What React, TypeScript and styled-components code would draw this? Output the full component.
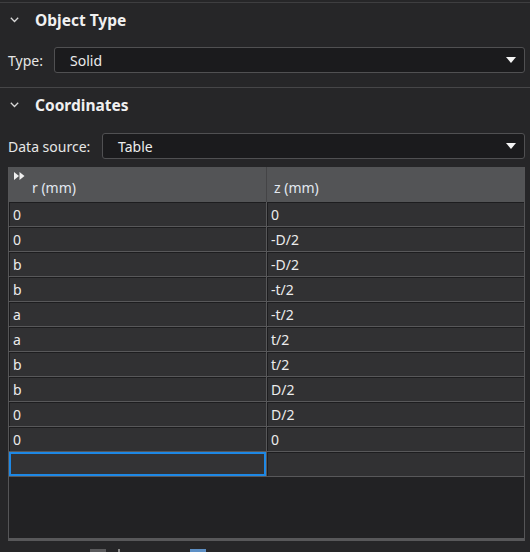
import React from "react";
import styled, { createGlobalStyle } from "styled-components";

const Global = createGlobalStyle`
  html, body { margin: 0; padding: 0; background: #262628; }
  body { font-family: "Noto Sans", "Open Sans", sans-serif; color: #e4e4e4; }
  * { box-sizing: border-box; }
`;

const Panel = styled.div`
  width: 530px;
  height: 552px;
  overflow: hidden;
  background: #262628;
  border-top: 1px solid #3e3e40;
  margin-top: 2px;
  display: flex;
  flex-direction: column;
`;

const SectionHeader = styled.div`
  height: 34px;
  display: flex;
  align-items: center;
  padding-left: 10px;
  gap: 16px;
  font-size: 15.5px;
  font-weight: 700;
  color: #f0f0f0;
`;

const Divider = styled.div`
  height: 1px;
  background: #464648;
  margin-top: 14px;
`;

const Spacer = styled.div<{ $h: number }>`
  height: ${(p) => p.$h}px;
  flex: none;
`;

const FieldRow = styled.div`
  display: flex;
  align-items: center;
  padding: 0 5px 0 8px;
  height: 26px;
  font-size: 14px;
`;

const Label = styled.div<{ $w: number }>`
  width: ${(p) => p.$w}px;
  flex: none;
  color: #e6e6e6;
`;

const Select = styled.div`
  flex: 1;
  height: 26px;
  background: #1b1b1d;
  border: 1px solid #505052;
  border-radius: 3px;
  display: flex;
  align-items: center;
  justify-content: space-between;
  padding: 0 8px 0 15px;
  color: #ececec;
`;

const Table = styled.div`
  margin: 8px 5px 0 8px;
  height: 374px;
  flex: none;
  background: #222224;
  border-left: 1px solid #555557;
  border-right: 1px solid #555557;
  border-bottom: 3px solid #58585a;
  display: flex;
  flex-direction: column;
`;

const HeaderRow = styled.div`
  display: grid;
  grid-template-columns: 257px 1fr;
  height: 35px;
  background: #535456;
`;

const HeaderCell = styled.div<{ $first?: boolean }>`
  position: relative;
  border-left: ${(p) => (p.$first ? "none" : "1px solid #444446")};
  display: flex;
  align-items: flex-end;
  padding: 0 0 5px ${(p) => (p.$first ? "23px" : "7px")};
  font-size: 14px;
  color: #e2e8f0;
`;

const Corner = styled.svg`
  position: absolute;
  left: 5px;
  top: 5px;
`;

const Body = styled.div`
  display: grid;
  grid-template-columns: 257px 1fr;
  column-gap: 1px;
  row-gap: 1px;
  background: #58585a;
  border-bottom: 1px solid #58585a;
`;

const Cell = styled.div<{ $selected?: boolean }>`
  height: 24px;
  background: #313133;
  border-top: 1px solid #1d1d1f;
  border-left: 1px solid #1d1d1f;
  display: flex;
  align-items: center;
  padding-left: 3px;
  font-size: 14px;
  color: #ececec;
  ${(p) =>
    p.$selected
      ? "border: 2px solid #1e88e5; padding-left: 2px; background: #333335;"
      : ""}
`;

const Footer = styled.div`
  height: 12px;
  position: relative;
  flex: none;
`;

const FootIcon = styled.div<{ $x: number; $w: number; $c: string }>`
  position: absolute;
  left: ${(p) => p.$x}px;
  top: 8px;
  width: ${(p) => p.$w}px;
  height: 4px;
  background: ${(p) => p.$c};
`;

const Chevron = () => (
  <svg width="9" height="6" viewBox="0 0 9 6">
    <path d="M0.8 0.8 L4.5 4.5 L8.2 0.8" stroke="#d8d8d8" strokeWidth="1.3" fill="none" />
  </svg>
);

const Caret = () => (
  <svg width="10" height="6" viewBox="0 0 10 6">
    <path d="M0 0 H10 L5 6 Z" fill="#f4f4f4" />
  </svg>
);

const rows: [string, string][] = [
  ["0", "0"],
  ["0", "-D/2"],
  ["b", "-D/2"],
  ["b", "-t/2"],
  ["a", "-t/2"],
  ["a", "t/2"],
  ["b", "t/2"],
  ["b", "D/2"],
  ["0", "D/2"],
  ["0", "0"],
];

export default function App() {
  return (
    <>
      <Global />
      <Panel>
        <SectionHeader>
          <Chevron />
          <span>Object Type</span>
        </SectionHeader>
        <Spacer $h={10} />
        <FieldRow>
          <Label $w={46}>Type:</Label>
          <Select>
            <span>Solid</span>
            <Caret />
          </Select>
        </FieldRow>
        <Divider />
        <SectionHeader>
          <Chevron />
          <span>Coordinates</span>
        </SectionHeader>
        <Spacer $h={11} />
        <FieldRow>
          <Label $w={94}>Data source:</Label>
          <Select>
            <span>Table</span>
            <Caret />
          </Select>
        </FieldRow>
        <Table>
          <HeaderRow>
            <HeaderCell $first>
              <Corner width="11" height="8" viewBox="0 0 11 8">
                <path d="M0 0 L5 4 L0 8 Z M5.5 0 L10.5 4 L5.5 8 Z" fill="#f0f0f0" />
              </Corner>
              r (mm)
            </HeaderCell>
            <HeaderCell>z (mm)</HeaderCell>
          </HeaderRow>
          <Body>
            {rows.map(([r, z], i) => (
              <React.Fragment key={i}>
                <Cell>{r}</Cell>
                <Cell>{z}</Cell>
              </React.Fragment>
            ))}
            <Cell $selected />
            <Cell />
          </Body>
        </Table>
        <Footer>
          <FootIcon $x={90} $w={16} $c="#5a5a5c" />
          <FootIcon $x={118} $w={2} $c="#8a8a8a" />
          <FootIcon $x={190} $w={16} $c="#5d8fc4" />
        </Footer>
      </Panel>
    </>
  );
}
